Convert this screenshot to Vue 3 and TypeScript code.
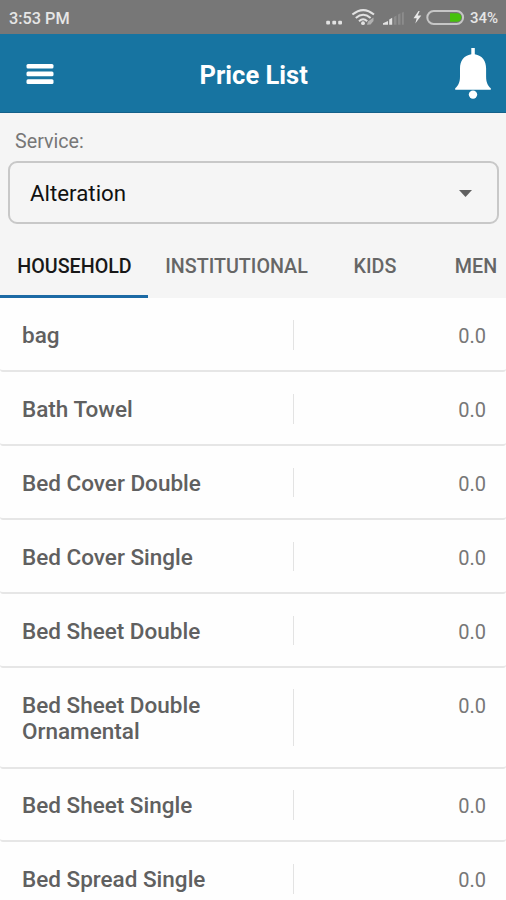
<script setup lang="ts">
import { ref } from 'vue'

interface PriceItem {
  name: string
  price: string
}

const tabs: string[] = ['HOUSEHOLD', 'INSTITUTIONAL', 'KIDS', 'MEN']
const activeTab = ref('HOUSEHOLD')
const service = ref('Alteration')

const items: PriceItem[] = [
  { name: 'bag', price: '0.0' },
  { name: 'Bath Towel', price: '0.0' },
  { name: 'Bed Cover Double', price: '0.0' },
  { name: 'Bed Cover Single', price: '0.0' },
  { name: 'Bed Sheet Double', price: '0.0' },
  { name: 'Bed Sheet Double Ornamental', price: '0.0' },
  { name: 'Bed Sheet Single', price: '0.0' },
  { name: 'Bed Spread Single', price: '0.0' },
]
</script>

<template>
  <div class="screen">
    <div class="status">
      <span class="clock">3:53 PM</span>
      <svg class="indicators" width="140" height="34" viewBox="0 0 140 34">
        <g fill="#e2e2e2">
          <rect x="0.2" y="20.8" width="3.8" height="3.8" rx="1" />
          <rect x="6.3" y="20.8" width="3.8" height="3.8" rx="1" />
          <rect x="12.2" y="20.8" width="3.8" height="3.8" rx="1" />
        </g>
        <g fill="none" stroke="#e2e2e2" stroke-width="2">
          <path d="M26.4 14.6Q37.2 5.6 48 14.6" />
          <path d="M29.8 18Q37.2 11.6 44.6 18" />
          <path d="M33 21.2Q37.2 17.4 41.2 21.2" />
        </g>
        <circle cx="37" cy="23.2" r="1.9" fill="#e2e2e2" />
        <path d="M41 24.800l1-3.300 5.500-4v3.500l-3 3.500z" fill="#b0b0b0" />
        <path d="M57 24.800v-1.500l5-2.300v3.800zM63.200 24.800v-5.300l3-1.700v7z" fill="#e2e2e2" />
        <path d="M67.800 24.800v-7.800l2.700-1.600v9.400zM72 24.800v-10.300l2.500-1.300v11.600zM75.900 24.800v-12l1.900-1v13z" fill="#8c8c8c" />
        <path d="M92.500 11l-5 7.200h3.200l-1.400 5.200 6-7.800h-3.600l2-4.600z" fill="#e8e8e8" />
        <rect x="101.300" y="11.100" width="35.800" height="12.800" rx="6.400" fill="none" stroke="#c6c6c6" stroke-width="2" />
        <path d="M124 13.300h7.200a4.200 4.200 0 0 1 0 8.400H124z" fill="#46c10b" />
      </svg>
      <span class="percent">34%</span>
    </div>

    <header class="appbar">
      <button class="icon-button menu" aria-label="Menu">
        <svg width="28" height="22" viewBox="0 0 28 22" fill="#fff">
          <rect x="0.500" y="0.900" width="27" height="4.600" rx="1.500" />
          <rect x="0.500" y="8.600" width="27" height="4.600" rx="1.500" />
          <rect x="0.500" y="16.300" width="27" height="4.600" rx="1.500" />
        </svg>
      </button>
      <h1 class="title">Price List</h1>
      <button class="icon-button bell" aria-label="Notifications">
        <svg width="36" height="52" viewBox="0 0 36 52" fill="#fff">
          <path d="M16.300 0h3.500v6.200c7.600 1.300 11.300 6.400 11.300 14.300v8c0 5.500 1.300 8.700 4.700 11.800v1.500H.2v-1.500C3.600 37.200 5 34 5 28.500v-8C5 12.600 8.700 7.500 16.300 6.200z" />
          <circle cx="18" cy="46.600" r="4.200" />
        </svg>
      </button>
    </header>

    <section class="filter">
      <label class="label">Service:</label>
      <div class="select">
        <span class="value">{{ service }}</span>
        <svg class="caret" width="13" height="7" viewBox="0 0 13 7"><path d="M0 0h13L6.500 7z" fill="#606060" /></svg>
      </div>
    </section>

    <nav class="tabs">
      <button
        v-for="tab in tabs"
        :key="tab"
        class="tab"
        :class="[tab.toLowerCase(), { active: tab === activeTab }]"
        @click="activeTab = tab"
      ><span>{{ tab }}</span></button>
    </nav>

    <main class="list">
      <article v-for="item in items" :key="item.name" class="row">
        <div class="name">{{ item.name }}</div>
        <div class="price">{{ item.price }}</div>
      </article>
    </main>
  </div>
</template>

<style>
body {
  margin: 0;
  overflow: hidden;
}
</style>

<style scoped>
.screen {
  width: 506px;
  height: 900px;
  overflow: hidden;
  display: flex;
  flex-direction: column;
  background: #f5f5f5;
  font-family: Roboto, 'Liberation Sans', sans-serif;
}
button {
  border: 0;
  padding: 0;
  background: none;
  font-family: inherit;
}
.status {
  height: 34px;
  flex: none;
  display: flex;
  align-items: center;
  background: #777;
  color: #e6e6e6;
  font-weight: 500;
}
.clock {
  margin-left: 9px;
  width: 317px;
  padding-top: 2px;
  font-size: 16.300px;
}
.indicators {
  flex: none;
}
.percent {
  margin-left: 4px;
  padding-top: 2px;
  font-size: 15px;
}
.appbar {
  height: 79px;
  flex: none;
  box-sizing: border-box;
  display: flex;
  align-items: center;
  padding-top: 2px;
  background: #1774a1;
  border-bottom: 1px solid #14618a;
}
.icon-button {
  display: flex;
  flex: none;
}
.menu {
  margin-left: 26px;
}
.title {
  flex: 1;
  margin: 1px 0 0 145.600px;
  font-size: 25.500px;
  line-height: 30px;
  font-weight: 700;
  color: #fff;
}
.bell {
  margin-right: 15px;
}
.filter {
  flex: none;
  height: 121px;
  box-sizing: border-box;
  padding: 17px 7px 0 8px;
}
.label {
  display: block;
  padding-left: 7px;
  font-size: 19.700px;
  line-height: 24px;
  color: #777;
}
.select {
  margin-top: 7px;
  height: 63px;
  box-sizing: border-box;
  display: flex;
  align-items: center;
  justify-content: space-between;
  padding: 0 25px 0 20px;
  border: 2px solid #c8c8c8;
  border-radius: 9px;
}
.caret {
  margin-top: 1px;
}
.value {
  font-size: 22.300px;
  color: #111;
}
.tabs {
  flex: none;
  height: 64px;
  display: flex;
  overflow: hidden;
}
.tab {
  flex: none;
  height: 64px;
  box-sizing: border-box;
  padding-top: 3px;
  border-bottom: 3px solid transparent;
  font-size: 19.700px;
  font-weight: 500;
  color: #666;
  white-space: nowrap;
}
.tab.active {
  padding-left: 1px;
  color: #181818;
  border-bottom-color: #1c6aa5;
}
.household { width: 148px; }
.institutional { width: 177px; }
.kids { width: 100px; }
.men { width: 102px; }
.list {
  flex: none;
  padding-top: 0.500px;
  background: #fefefe;
}
.row {
  box-sizing: border-box;
  min-height: 73.900px;
  display: flex;
  padding: 21.500px 20px 20.700px 22px;
  border-bottom: 2px solid #e6e6e6;
  border-radius: 0 0 3px 3px;
}
.name {
  width: 272px;
  box-sizing: border-box;
  padding: 2.200px 40px 0.800px 0;
  border-right: 1px solid #e3e3e3;
  font-size: 22.500px;
  line-height: 26.700px;
  font-weight: 500;
  color: #606060;
}
.price {
  flex: 1;
  padding-top: 3.300px;
  text-align: right;
  font-size: 20px;
  line-height: 26px;
  color: #777;
}
</style>
